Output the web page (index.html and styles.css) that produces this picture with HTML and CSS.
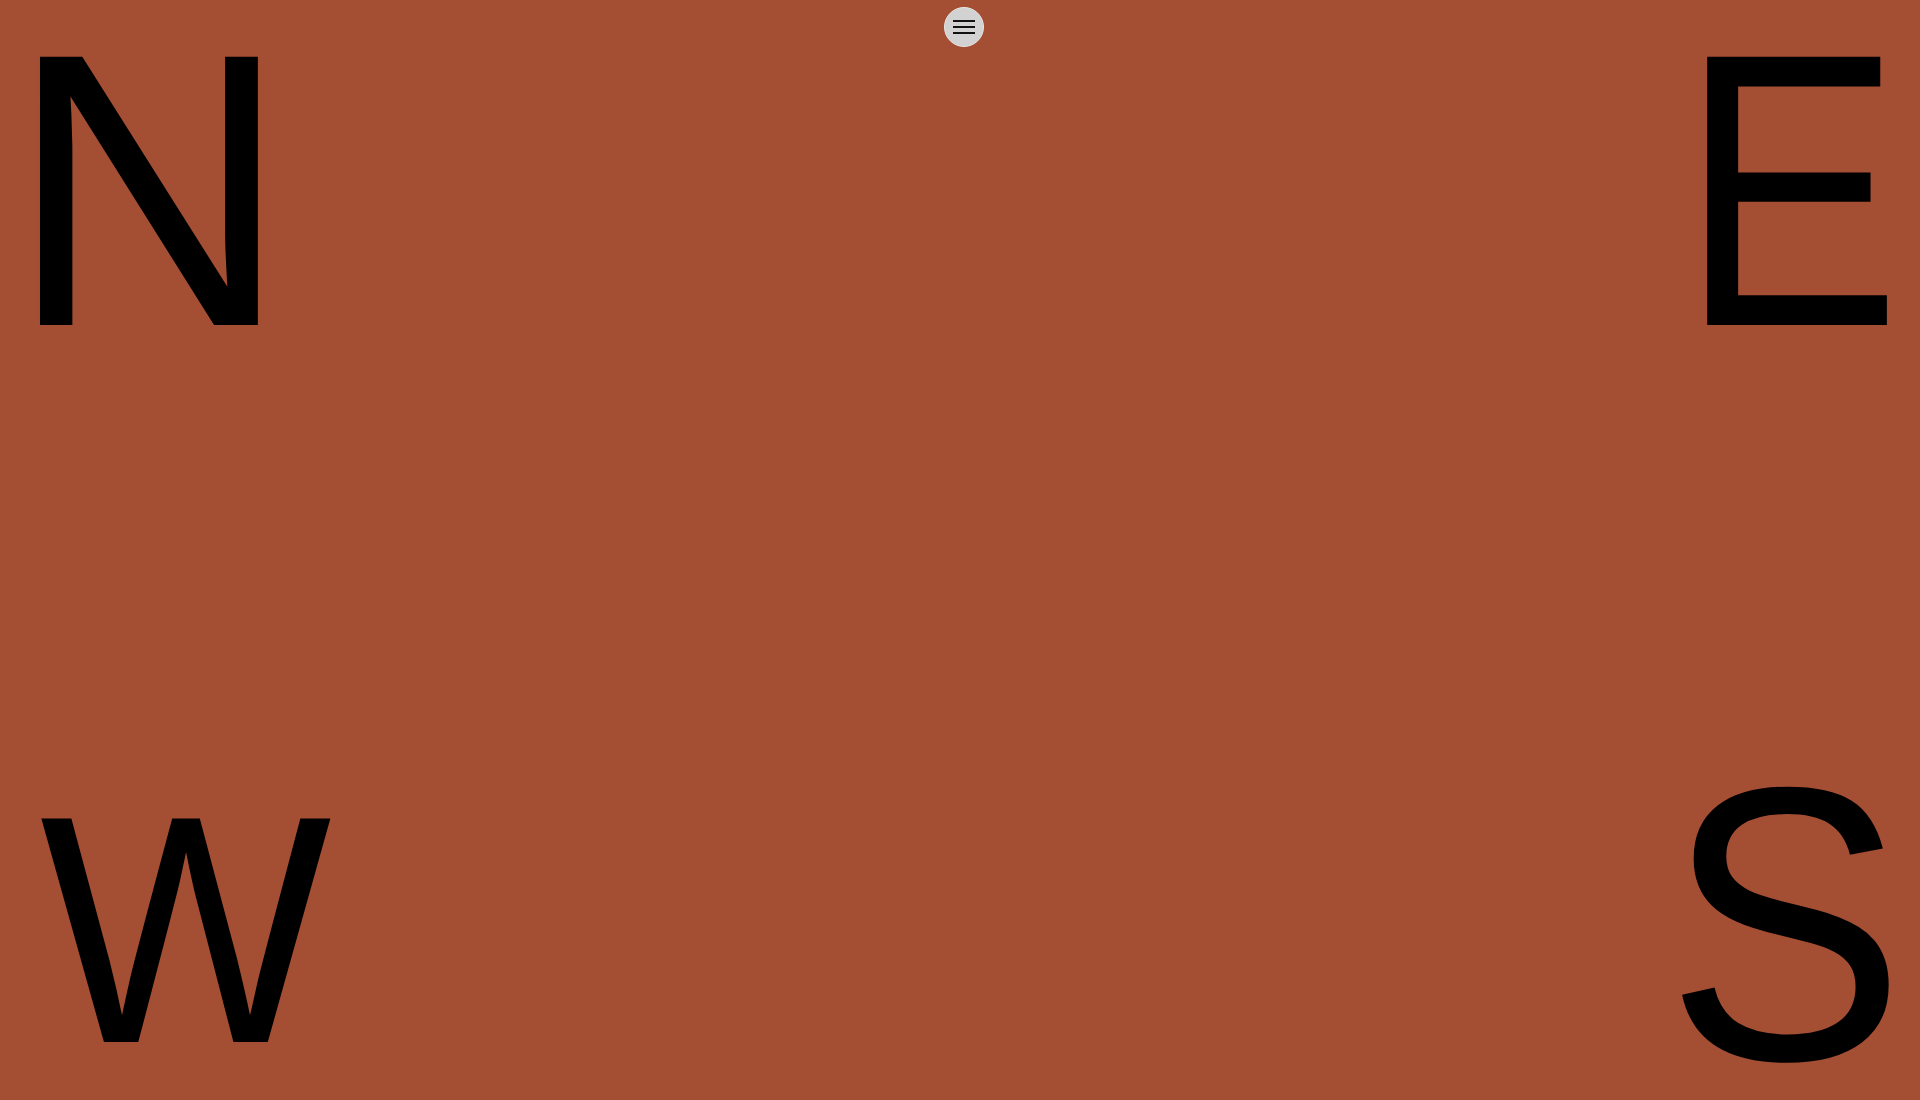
FILE: index.html
```html
<!DOCTYPE html>
<html lang="en">
<head>
<meta charset="utf-8">
<title>NEWS</title>
<link rel="stylesheet" href="styles.css">
</head>
<body>
<main class="page">
  <button class="menu-btn" aria-label="Menu">
    <svg width="22" height="14" viewBox="0 0 22 14" aria-hidden="true">
      <rect x="0" y="0" width="22" height="2" fill="#111"/>
      <rect x="0" y="6" width="22" height="2" fill="#111"/>
      <rect x="0" y="12" width="22" height="2" fill="#111"/>
    </svg>
  </button>
  <div class="row">
    <span class="letter">N</span>
    <span class="letter letter-e">E</span>
  </div>
  <div class="row">
    <span class="letter letter-w">W</span>
    <span class="letter letter-s">S</span>
  </div>
</main>
</body>
</html>
```

FILE: styles.css
```css
html, body {
  margin: 0;
  padding: 0;
  background: #a44e33;
}

.page {
  position: relative;
  height: 1100px;
  box-sizing: border-box;
  padding: 34px 15px 20px 8px;
  display: flex;
  flex-direction: column;
  justify-content: space-between;
  color: #000;
  font-family: "Liberation Sans", Arial, sans-serif;
}

.row {
  display: flex;
  justify-content: space-between;
  align-items: flex-end;
}

.letter {
  display: inline-block;
  font-size: 390px;
  line-height: 0.8;
  font-weight: 400;
}

.letter-e {
  margin-right: 4px;
  transform: scaleX(0.85);
  transform-origin: 100% 50%;
}

.letter-s {
  transform: scaleX(0.92);
  transform-origin: 100% 50%;
}

.letter-w {
  font-size: 325px;
  margin-left: 32px;
  margin-bottom: 20px;
  transform: scaleX(0.95);
  transform-origin: 0 50%;
}

.menu-btn {
  position: absolute;
  top: 7px;
  left: 50%;
  margin-left: -16px;
  box-sizing: border-box;
  width: 40px;
  height: 40px;
  border-radius: 50%;
  border: 1px solid #e6e6e6;
  background: #d2d2d2;
  padding: 0;
  display: flex;
  align-items: center;
  justify-content: center;
  cursor: pointer;
}
```
